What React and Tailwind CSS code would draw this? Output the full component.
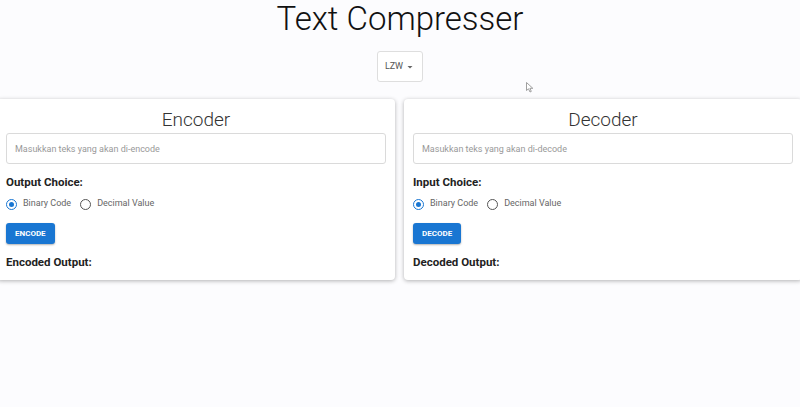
import React, { useState } from 'react';

const Radio = ({ checked, label, onClick }) => (
  <label className="flex items-center cursor-pointer" onClick={onClick}>
    <span
      className={`flex items-center justify-center w-[11px] h-[11px] rounded-full border-[1.5px] ${
        checked ? 'border-[#1976d2]' : 'border-[#555]'
      }`}
    >
      {checked && <span className="w-[5px] h-[5px] rounded-full bg-[#1976d2]" />}
    </span>
    <span className="ml-[6px] text-[9px] text-[#666]">{label}</span>
  </label>
);

const Panel = ({ title, placeholder, choiceLabel, button, outputLabel }) => {
  const [choice, setChoice] = useState('binary');
  return (
    <div className="w-[398px] bg-white rounded-[4px] shadow-[0_1px_4px_rgba(0,0,0,0.3)] px-[9px] pt-[9px] pb-[11px]">
      <h2 className="text-center text-[19px] font-light text-[#333] leading-[24px]">{title}</h2>
      <input
        className="mt-[1px] w-full h-[31px] border border-[#dadada] rounded-[3px] px-[8px] text-[9px] outline-none placeholder:text-[#999]"
        placeholder={placeholder}
      />
      <p className="mt-[11px] text-[11.5px] font-bold text-[#222] leading-[14px]">{choiceLabel}</p>
      <div className="mt-[8px] flex items-center gap-[9px] h-[14px]">
        <Radio checked={choice === 'binary'} label="Binary Code" onClick={() => setChoice('binary')} />
        <Radio checked={choice === 'decimal'} label="Decimal Value" onClick={() => setChoice('decimal')} />
      </div>
      <button className="mt-[12px] block h-[21px] px-[9px] bg-[#1976d2] text-white text-[8px] font-bold rounded-[3px] shadow-[0_1px_2px_rgba(0,0,0,0.3)]">
        {button}
      </button>
      <p className="mt-[11px] text-[11.5px] font-bold text-[#222] leading-[14px]">{outputLabel}</p>
    </div>
  );
};

export default function App() {
  return (
    <div className="relative min-h-[407px] bg-[#fcfcfe] overflow-hidden" style={{ fontFamily: 'Roboto, sans-serif' }}>
      <h1 className="text-center text-[33px] font-light text-[#111] leading-[38px]">Text Compresser</h1>
      <div className="flex justify-center mt-[13px]">
        <button className="flex items-center h-[31px] pl-[7px] pr-[6px] border border-[#dedede] rounded-[3px] bg-white text-[9px] text-[#555]">
          LZW
          <svg width="12" height="12" viewBox="0 0 24 24" className="ml-[1px]">
            <path d="M7 10l5 5 5-5z" fill="#666" />
          </svg>
        </button>
      </div>
      <div className="flex gap-[9px] ml-[-3px] w-[805px] mt-[17px]">
        <Panel
          title="Encoder"
          placeholder="Masukkan teks yang akan di-encode"
          choiceLabel="Output Choice:"
          button="ENCODE"
          outputLabel="Encoded Output:"
        />
        <Panel
          title="Decoder"
          placeholder="Masukkan teks yang akan di-decode"
          choiceLabel="Input Choice:"
          button="DECODE"
          outputLabel="Decoded Output:"
        />
      </div>
      {/* mouse pointer captured in the screenshot */}
      <svg width="8" height="11" viewBox="0 0 8 11" className="absolute left-[526px] top-[82px]">
        <path d="M0.5 0.5 L0.5 8.5 L2.5 6.8 L4 10 L5.3 9.4 L3.9 6.3 L6.8 6.3 Z" fill="#fff" stroke="#888" strokeWidth="0.8" />
      </svg>
    </div>
  );
}
